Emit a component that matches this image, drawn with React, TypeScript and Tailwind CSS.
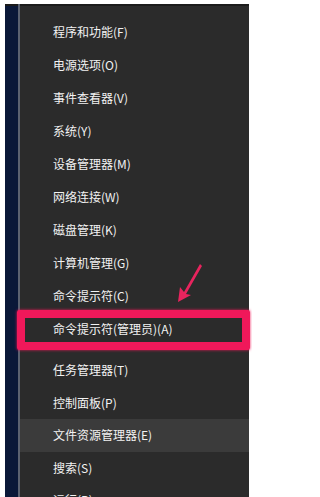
import { FC } from "react";

const topItems = [
  "程序和功能(F)",
  "电源选项(O)",
  "事件查看器(V)",
  "系统(Y)",
  "设备管理器(M)",
  "网络连接(W)",
  "磁盘管理(K)",
  "计算机管理(G)",
  "命令提示符(C)",
  "命令提示符(管理员)(A)",
];

const bottomItems = ["任务管理器(T)", "控制面板(P)", "文件资源管理器(E)", "搜索(S)", "运行(R)"];

const Row: FC<{ label: string; active?: boolean; short?: boolean }> = ({ label, active, short }) => (
  <div
    className={`shrink-0 flex items-center pl-[33px] text-[12px] text-[#f2f2f2] ${
      short ? "h-[32.5px]" : "h-[33px]"
    } ${active ? "bg-[#3b3b3b]" : ""}`}
  >
    {label}
  </div>
);

const App: FC = () => {
  return (
    <div
      className="relative w-[252px] h-[497px] overflow-hidden bg-white pt-[4px] pl-[5px] pr-[3px] flex"
      style={{ fontFamily: '"Noto Sans CJK SC", "Noto Sans", sans-serif' }}
    >
      <div className="w-[13px] bg-[#0a1838] border-t-2 border-[#1a1a1a]" />
      <div className="w-[2px] bg-[#5b6270]" />
      <div className="flex-1 flex flex-col bg-[#2b2b2b] border-t-2 border-[#1c1c1c] pt-[9px]">
        {topItems.map((item) => (
          <Row key={item} label={item} />
        ))}
        <div className="h-[9px] shrink-0" />
        {bottomItems.map((item) => (
          <Row key={item} label={item} short active={item.startsWith("文件")} />
        ))}
      </div>

      {/* annotation: highlight box */}
      <div className="absolute left-[17px] top-[310px] w-[233px] h-[40px] border-[8px] border-[#f0185a] rounded-[2px] shadow-[0_0_3px_#f0185a]" />

      {/* annotation: arrow */}
      <svg className="absolute left-[172px] top-[260px]" width="34" height="46" viewBox="0 0 34 46">
        <path d="M28 4 L12 32 L8 27 L6 42 L19 35 L14 34 L30 6 Z" fill="#e8245e" />
      </svg>
    </div>
  );
};

export default App;
